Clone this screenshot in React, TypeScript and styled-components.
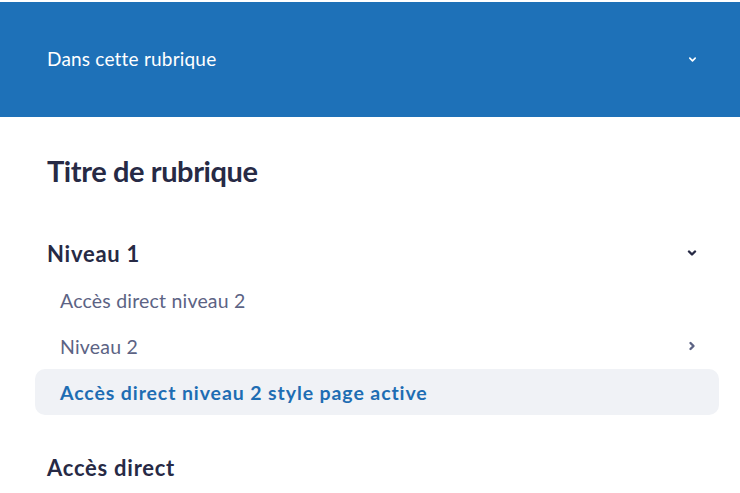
import React from "react";
import styled, { createGlobalStyle } from "styled-components";

const Global = createGlobalStyle`
  html, body { margin: 0; padding: 0; background: #ffffff; }
  body { font-family: "Lato", "Open Sans", sans-serif; }
  * { box-sizing: border-box; }
`;

const Page = styled.div`
  width: 740px;
  padding-top: 2px;
`;

const Header = styled.header`
  height: 115px;
  background: #1e71b8;
  color: #ffffff;
  display: flex;
  align-items: center;
  justify-content: space-between;
  padding: 0 43px 0 47px;
`;

const HeaderTitle = styled.span`
  font-size: 19px;
  font-weight: 400;
  letter-spacing: 0.2px;
  margin-top: -2px;
`;

const Nav = styled.nav`
  padding: 38px 21px 0 35px;
  display: flex;
  flex-direction: column;
`;

const Title = styled.h2`
  margin: 0 0 0 12px;
  font-size: 29px;
  line-height: 32px;
  font-weight: 700;
  color: #272a45;
  letter-spacing: -0.4px;
`;

const Level1 = styled.div<{ $mt: number }>`
  margin-top: ${(p) => p.$mt}px;
  display: flex;
  align-items: center;
  justify-content: space-between;
  padding: 0 22px 0 12px;
  height: 28px;
  font-size: 22px;
  font-weight: 700;
  color: #272a45;
  letter-spacing: 0.75px;
`;

const SubList = styled.ul`
  list-style: none;
  margin: 10px 0 0;
  padding: 0;
  display: flex;
  flex-direction: column;
`;

const SubItem = styled.li<{ $active?: boolean }>`
  height: 46px;
  display: flex;
  align-items: center;
  justify-content: space-between;
  padding: 0 22px 0 25px;
  border-radius: 10px;
  font-size: 19.5px;
  letter-spacing: ${(p) => (p.$active ? "0.9px" : "0.2px")};
  font-weight: ${(p) => (p.$active ? 700 : 400)};
  color: ${(p) => (p.$active ? "#1e6db3" : "#5c6384")};
  background: ${(p) => (p.$active ? "#f0f2f6" : "transparent")};
`;

const Chevron = ({ dir, color, size = 10, stroke = 2.4 }: { dir: "down" | "right"; color: string; size?: number; stroke?: number }) => (
  <svg width={size} height={size} viewBox="0 0 10 10" fill="none">
    {dir === "down" ? (
      <path d="M2 3.5 L5 6.5 L8 3.5" stroke={color} strokeWidth={stroke} strokeLinecap="round" strokeLinejoin="round" />
    ) : (
      <path d="M3.5 2 L6.5 5 L3.5 8" stroke={color} strokeWidth={stroke} strokeLinecap="round" strokeLinejoin="round" />
    )}
  </svg>
);

export default function App() {
  return (
    <Page>
      <Global />
      <Header>
        <HeaderTitle>Dans cette rubrique</HeaderTitle>
        <Chevron dir="down" color="#ffffff" size={9} stroke={1.8} />
      </Header>
      <Nav>
        <Title>Titre de rubrique</Title>
        <Level1 $mt={52}>
          <span>Niveau 1</span>
          <Chevron dir="down" color="#272a45" />
        </Level1>
        <SubList>
          <SubItem>Accès direct niveau 2</SubItem>
          <SubItem>
            <span>Niveau 2</span>
            <Chevron dir="right" color="#5c6384" />
          </SubItem>
          <SubItem $active>Accès direct niveau 2 style page active</SubItem>
        </SubList>
        <Level1 $mt={38}>
          <span>Accès direct</span>
        </Level1>
      </Nav>
    </Page>
  );
}
